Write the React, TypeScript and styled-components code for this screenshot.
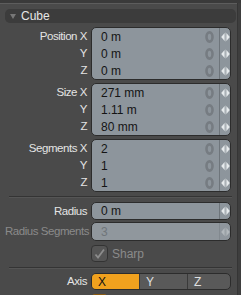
import styled, { createGlobalStyle } from 'styled-components';

const GlobalStyle = createGlobalStyle`
  html, body {
    margin: 0;
    padding: 0;
    background: #4a4a4a;
    overflow: hidden;
  }
  body {
    font-family: 'Liberation Sans', Arial, sans-serif;
    font-size: 11px;
    color: #e2e2e2;
  }
`;

const COLORS = {
  PANEL: '#4a4a4a',
  HEADER: '#3c3c3c',
  FIELD: '#8d959c',
  FIELD_DISABLED: '#90979d',
  BORDER: '#2c2c2c',
  LABEL: '#e4e4e4',
  LABEL_DISABLED: '#8a8a8a',
  ORANGE: '#f0a11e',
};

const Frame = styled.div`
  display: flex;
  width: 241px;
  height: 295px;
  overflow: hidden;
  border-top: 3px solid #3a3a3a;
  box-sizing: border-box;
`;

const Panel = styled.div`
  flex: 1;
  display: flex;
  flex-direction: column;
  border-top: 1px solid #5d5d5d;
  padding: 5px 1px 0 5px;
`;

const ScrollStrip = styled.div`
  width: 3px;
  background: #3e3e3e;
  border-left: 1px solid #353535;
`;

const Header = styled.div`
  display: flex;
  align-items: center;
  gap: 5px;
  height: 16px;
  padding-left: 5px;
  border-radius: 5px;
  background: ${COLORS.HEADER};
  font-size: 12px;
  color: #e6e6e6;
`;

const Arrow = styled.span`
  width: 0;
  height: 0;
  border-left: 3px solid transparent;
  border-right: 3px solid transparent;
  border-top: 5px solid #777;
`;

const Body = styled.div`
  display: flex;
  flex-direction: column;
  padding-right: 4px;
`;

const Group = styled.div<{ $top?: number }>`
  display: flex;
  gap: 4px;
  margin-top: ${({ $top }) => $top ?? 3}px;
`;

const Labels = styled.div`
  width: 82px;
  display: flex;
  flex-direction: column;
  padding-top: 1px;
`;

const Label = styled.div<{ $disabled?: boolean; $h?: number }>`
  height: ${({ $h }) => $h ?? 17}px;
  line-height: ${({ $h }) => $h ?? 17}px;
  text-align: right;
  white-space: nowrap;
  font-size: 11.5px;
  letter-spacing: -0.45px;
  color: ${({ $disabled }) => ($disabled ? COLORS.LABEL_DISABLED : COLORS.LABEL)};
`;

const FieldBox = styled.div<{ $disabled?: boolean }>`
  width: 138px;
  display: flex;
  flex-direction: column;
  border: 1px solid ${COLORS.BORDER};
  border-radius: 5px;
  background: ${({ $disabled }) => ($disabled ? COLORS.FIELD_DISABLED : COLORS.FIELD)};
  overflow: hidden;
`;

const FieldLine = styled.div<{ $h?: number }>`
  display: flex;
  align-items: center;
  height: ${({ $h }) => $h ?? 17}px;
`;

const Value = styled.div<{ $disabled?: boolean }>`
  flex: 1;
  padding-left: 9px;
  font-size: 12px;
  color: ${({ $disabled }) => ($disabled ? '#6f757a' : '#141414')};
`;

const Reset = styled.div`
  width: 14px;
  display: flex;
  justify-content: center;
  margin-right: 3px;
`;

const Spinner = styled.div<{ $disabled?: boolean }>`
  align-self: stretch;
  width: 10px;
  display: flex;
  align-items: center;
  justify-content: center;
  border-left: 1px solid #6e757b;
  opacity: ${({ $disabled }) => ($disabled ? 0.4 : 1)};
`;

const Separator = styled.div<{ $top: number }>`
  height: 1px;
  margin: ${({ $top }) => $top}px 0 0 4px;
  background: #343434;
  box-shadow: 0 1px 0 #555;
`;

const CheckRow = styled.div`
  display: flex;
  align-items: center;
  gap: 4px;
  margin: 4px 0 0 86px;
  color: ${COLORS.LABEL_DISABLED};
  font-size: 12px;
`;

const CheckBox = styled.div<{ $on?: boolean }>`
  width: 15px;
  height: 15px;
  border: 1px solid ${({ $on }) => ($on ? '#8a5a10' : '#333')};
  border-radius: 4px;
  background: ${({ $on }) => ($on ? COLORS.ORANGE : '#555')};
  display: flex;
  align-items: center;
  justify-content: center;
`;

const Segmented = styled.div`
  width: 138px;
  height: 15px;
  display: flex;
  border: 1px solid ${COLORS.BORDER};
  border-radius: 5px;
  overflow: hidden;
  background: #595959;
`;

const Segment = styled.div<{ $active?: boolean; $w: number }>`
  width: ${({ $w }) => $w}px;
  display: flex;
  align-items: center;
  padding-left: 6px;
  box-sizing: border-box;
  font-size: 12px;
  color: ${({ $active }) => ($active ? '#111' : '#e0e0e0')};
  background: ${({ $active }) => ($active ? COLORS.ORANGE : 'transparent')};
  & + & {
    border-left: 1px solid #3a3a3a;
  }
`;

function ResetIcon() {
  return (
    <svg width='9' height='12' viewBox='0 0 9 12'>
      <ellipse cx='4.5' cy='6' rx='3' ry='4.6' fill='none' stroke='#767c82' strokeWidth='2.6' />
    </svg>
  );
}

function SpinIcon() {
  return (
    <svg width='9' height='10' viewBox='0 0 9 10'>
      <polygon points='3.6,1 3.6,9 0.2,5' fill='#e6eaec' />
      <polygon points='5.4,1 5.4,9 8.8,5' fill='#e6eaec' />
      <rect x='4.1' y='0.5' width='0.8' height='9' fill='#b2b8bc' />
    </svg>
  );
}

function CheckIcon({ color }: { color: string }) {
  return (
    <svg width='11' height='11' viewBox='0 0 11 11'>
      <path d='M1.5 6.5 L4 9.5 L10 1.5' fill='none' stroke={color} strokeWidth='1.8' />
    </svg>
  );
}

type Line = { label: string; value: string };

function FieldGroup({ lines, top }: { lines: Line[]; top?: number }) {
  return (
    <Group $top={top}>
      <Labels>
        {lines.map((line) => (
          <Label key={line.label}>{line.label}</Label>
        ))}
      </Labels>
      <FieldBox>
        {lines.map((line) => (
          <FieldLine key={line.label}>
            <Value>{line.value}</Value>
            <Reset>
              <ResetIcon />
            </Reset>
            <Spinner>
              <SpinIcon />
            </Spinner>
          </FieldLine>
        ))}
      </FieldBox>
    </Group>
  );
}

export default function App() {
  return (
    <>
      <GlobalStyle />
      <Frame>
        <Panel>
          <Header>
            <Arrow />
            <span>Cube</span>
          </Header>
          <Body>
            <FieldGroup
              top={4}
              lines={[
                { label: 'Position X', value: '0 m' },
                { label: 'Y', value: '0 m' },
                { label: 'Z', value: '0 m' },
              ]}
            />
            <FieldGroup
              lines={[
                { label: 'Size X', value: '271 mm' },
                { label: 'Y', value: '1.11 m' },
                { label: 'Z', value: '80 mm' },
              ]}
            />
            <FieldGroup
              lines={[
                { label: 'Segments X', value: '2' },
                { label: 'Y', value: '1' },
                { label: 'Z', value: '1' },
              ]}
            />
            <Separator $top={4} />
            <Group $top={5}>
              <Labels>
                <Label>Radius</Label>
              </Labels>
              <FieldBox>
                <FieldLine $h={16}>
                  <Value>0 m</Value>
                  <Spinner>
                    <SpinIcon />
                  </Spinner>
                </FieldLine>
              </FieldBox>
            </Group>
            <Group $top={2}>
              <Labels>
                <Label $disabled>Radius Segments</Label>
              </Labels>
              <FieldBox $disabled>
                <FieldLine>
                  <Value $disabled>3</Value>
                  <Spinner $disabled>
                    <SpinIcon />
                  </Spinner>
                </FieldLine>
              </FieldBox>
            </Group>
            <CheckRow>
              <CheckBox>
                <CheckIcon color='#8c8c8c' />
              </CheckBox>
              <span>Sharp</span>
            </CheckRow>
            <Separator $top={5} />
            <Group $top={5}>
              <Labels>
                <Label $h={15}>Axis</Label>
              </Labels>
              <Segmented>
                <Segment $active $w={47}>X</Segment>
                <Segment $w={48}>Y</Segment>
                <Segment $w={43}>Z</Segment>
              </Segmented>
            </Group>
            <CheckRow>
              <CheckBox $on />
            </CheckRow>
          </Body>
        </Panel>
        <ScrollStrip />
      </Frame>
    </>
  );
}
